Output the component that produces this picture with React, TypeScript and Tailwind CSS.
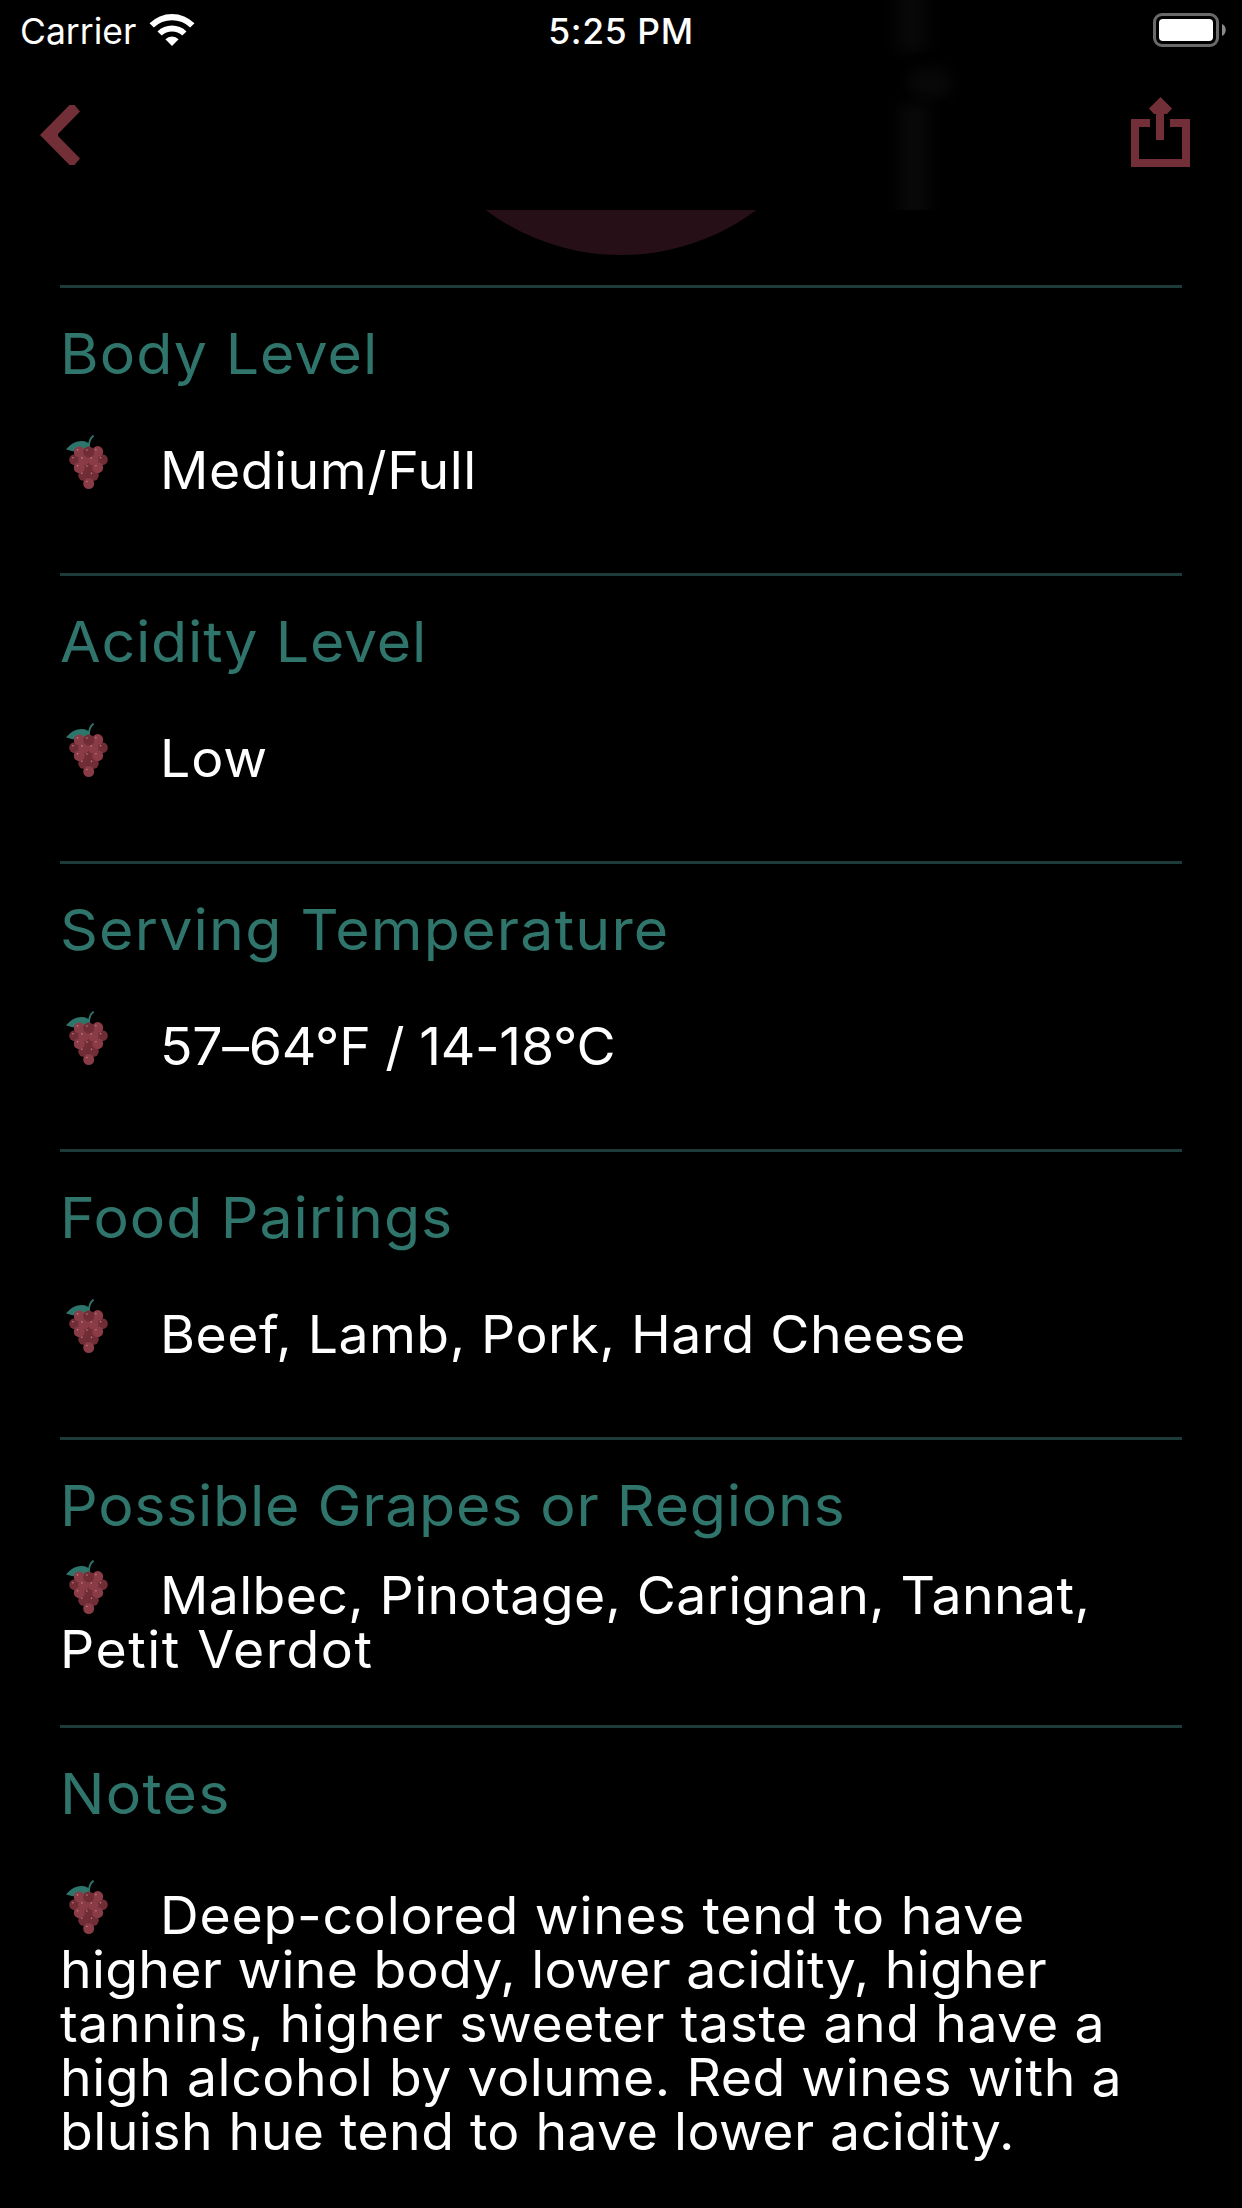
import type { ReactNode } from "react";

type Line = { text: string; spacing: string };

type Detail = {
  title: Line;
  lines: Line[];
};

const details: Detail[] = [
  {
    title: { text: "Body Level", spacing: "tracking-[1.02px]" },
    lines: [{ text: "Medium/Full", spacing: "tracking-[0.54px]" }],
  },
  {
    title: { text: "Acidity Level", spacing: "tracking-[0.74px]" },
    lines: [{ text: "Low", spacing: "tracking-[0.85px]" }],
  },
  {
    title: { text: "Serving Temperature", spacing: "tracking-[1.17px]" },
    lines: [{ text: "57–64°F / 14-18°C", spacing: "tracking-[-0.26px]" }],
  },
  {
    title: { text: "Food Pairings", spacing: "tracking-[0.89px]" },
    lines: [{ text: "Beef, Lamb, Pork, Hard Cheese", spacing: "tracking-[0.46px]" }],
  },
  {
    title: { text: "Possible Grapes or Regions", spacing: "tracking-[0.69px]" },
    lines: [
      { text: "Malbec, Pinotage, Carignan, Tannat,", spacing: "tracking-[0.37px]" },
      { text: "Petit Verdot", spacing: "tracking-[1.45px]" },
    ],
  },
];

const notes: Detail = {
  title: { text: "Notes", spacing: "tracking-[1.23px]" },
  lines: [
    { text: "Deep-colored wines tend to have", spacing: "tracking-[0.75px]" },
    { text: "higher wine body, lower acidity, higher", spacing: "tracking-[0.25px]" },
    { text: "tannins, higher sweeter taste and have a", spacing: "tracking-[0.54px]" },
    { text: "high alcohol by volume. Red wines with a", spacing: "tracking-[0.53px]" },
    { text: "bluish hue tend to have lower acidity.", spacing: "tracking-[0.43px]" },
  ],
};

// [cx, cy, dark]
const grapes: [number, number, boolean][] = [
  [28.7, 33, true],
  [23.7, 40.3, true],
  [33.3, 40.3, true],
  [14.7, 24.7, true],
  [42.3, 24.7, true],
  [19.3, 32.7, false],
  [37.7, 32.7, false],
  [23.7, 24.9, false],
  [33, 24.9, false],
  [19.3, 16.9, false],
  [37.7, 16.6, false],
  [28.7, 17, true],
  [28.7, 48.5, false],
];

function GrapeIcon() {
  return (
    <svg viewBox="0 0 54 54" className="-mt-[9px] mr-[46px] inline-block size-[54px] align-baseline" aria-hidden="true">
      <path d="M6 14.3C11 8.5 16.5 5.7 22 5.9C25.5 6 28 7.2 29.6 9.5V16H16.5C12.5 17 9.5 15.5 6 14.3Z" fill="#2e766b" />
      <path d="M28.9 14C28.6 7.5 30 3 33.6 0.7" fill="none" stroke="#2e766b" strokeWidth="1.9" />
      {grapes.map(([cx, cy, dark]) => (
        <circle key={`${cx}-${cy}`} cx={cx} cy={cy} r="5.5" fill={dark ? "#712d36" : "#8a3c46"} />
      ))}
      {grapes.map(([cx, cy]) => (
        <circle key={`shine-${cx}-${cy}`} cx={cx - 1.8} cy={cy - 2} r="0.8" fill="#c08088" />
      ))}
    </svg>
  );
}

function StatusBar() {
  return (
    <div className="grid h-[60px] grid-cols-3 pt-[13px] text-[35.5px] leading-[38px] text-white">
      <div className="flex items-start pl-5">
        <span>Carrier</span>
        <svg viewBox="0 0 46 34" className="ml-[13px] h-[34px] w-[46px]" aria-hidden="true">
          <path d="M0.5 10.3A32 32 0 0 1 45.5 10.3L41.2 14.6A26 26 0 0 0 4.8 14.6Z" fill="#fff" />
          <path d="M8.5 18.4A20.8 20.8 0 0 1 37.5 18.4L33.3 22.6A14.8 14.8 0 0 0 12.7 22.6Z" fill="#fff" />
          <path d="M16.4 26.3A9.4 9.4 0 0 1 29.6 26.3L23 33Z" fill="#fff" />
        </svg>
      </div>
      <div className="text-center font-medium tracking-[0.6px]">5:25 PM</div>
      <div className="flex justify-end pr-4">
        <svg viewBox="0 0 73 34" className="h-[34px] w-[73px]" aria-hidden="true">
          <rect x="1.5" y="1.5" width="63" height="31" rx="7.5" fill="none" stroke="#6a6a6a" strokeWidth="3" />
          <rect x="6" y="6" width="54" height="22" rx="4" fill="#fff" />
          <path d="M69 11C74 13 74 21 69 23Z" fill="#8a8a8a" />
        </svg>
      </div>
    </div>
  );
}

function Header() {
  return (
    <header className="relative h-[210px] overflow-hidden">
      {/* content showing faintly through the translucent bar */}
      <div className="absolute -top-4 left-[888px] h-[68px] w-12 bg-linear-to-r from-transparent via-[#0a0a0a] to-transparent blur-[6px]" />
      <div className="absolute top-[68px] left-[908px] h-8 w-11 rounded-full bg-[#080808] blur-[7px]" />
      <div className="absolute top-[104px] left-[890px] h-32 w-12 bg-linear-to-r from-transparent via-[#0a0a0a] to-transparent blur-[6px]" />
      <div className="relative">
        <StatusBar />
        <div className="flex justify-between pr-[52px] pl-10">
          <button aria-label="Back" className="mt-[45px] h-[60px] w-10">
            <svg viewBox="0 0 40 60" className="h-[60px] w-10">
              <path d="M0 30L29.5 0H34.5L40 6.5L18 29V31L40 53.5L34.5 60H29.5Z" fill="#732f37" />
            </svg>
          </button>
          <button aria-label="Share" className="mt-[37px] h-[70px] w-[59px]">
            <svg viewBox="0 0 59 70" className="h-[70px] w-[59px]" fill="#732f37">
              <path d="M0 22H19V30H8V62H51V30H39V22H59V70H0Z" />
              <path d="M29.5 0L41 11.5L36 17H33V43H25V17H23L18 11.5Z" />
            </svg>
          </button>
        </div>
      </div>
    </header>
  );
}

function Section({ title, children }: { title: Line; children: ReactNode }) {
  return (
    <section className="h-[288px] border-t-[3px] border-[#1b3a38] pt-[36px]">
      <h2
        className={`h-[60px] origin-left scale-x-[1.04] text-[56.8px] leading-[60px] whitespace-nowrap text-[#2f756b] ${title.spacing}`}
      >
        {title.text}
      </h2>
      {children}
    </section>
  );
}

function Value({ lines }: { lines: Line[] }) {
  return (
    <div className="text-[51.5px] leading-[54px] text-white">
      {lines.map((line, i) => (
        <div key={line.text} className="h-[54px] whitespace-nowrap">
          {i === 0 && <GrapeIcon />}
          <span className={`inline-block origin-left scale-x-[1.04] ${line.spacing}`}>{line.text}</span>
        </div>
      ))}
    </div>
  );
}

export default function App() {
  return (
    <div className="h-[2208px] w-[1242px] overflow-hidden bg-black font-['Inter','Liberation_Sans',sans-serif]">
      <Header />
      <div className="flex h-[75px] items-start justify-center">
        <div className="flex h-[45px] items-end overflow-hidden">
          <div className="size-[452px] rounded-full bg-[#260f17]" />
        </div>
      </div>
      <main className="px-[60px]">
        {details.map((d) => (
          <Section key={d.title.text} title={d.title}>
            <div className="flex h-[171px] items-center">
              <Value lines={d.lines} />
            </div>
          </Section>
        ))}
        <Section title={notes.title}>
          <div className="pt-16">
            <Value lines={notes.lines} />
          </div>
        </Section>
      </main>
    </div>
  );
}
